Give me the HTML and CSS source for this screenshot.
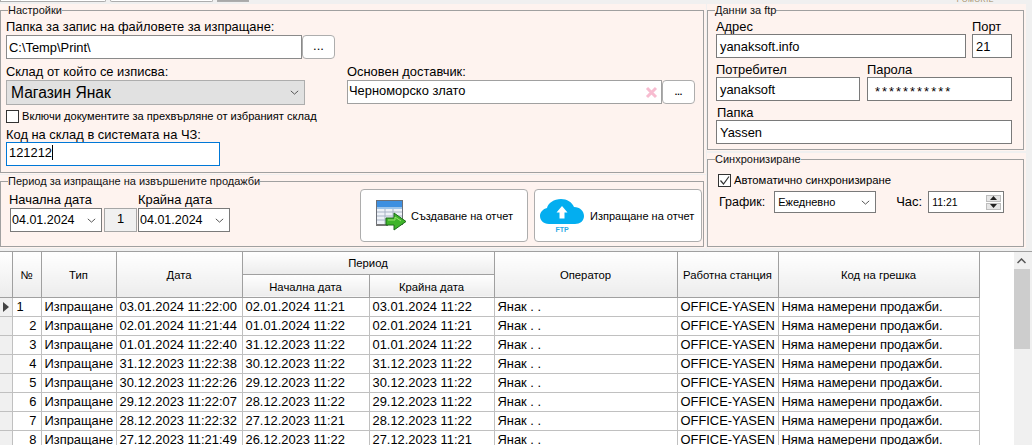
FILE: index.html
```html
<!DOCTYPE html>
<html lang="bg">
<head>
<meta charset="utf-8">
<title>Настройки</title>
<link rel="stylesheet" href="styles.css">
</head>
<body>
<div class="strip">
  <span class="tab tab-a"></span><span class="tab tab-b"></span><span class="tab tab-c"></span>
  <span class="logo">POMORIE</span>
</div>
<div class="top">
  <div class="col-left">
    <div class="panel p-settings">
      <fieldset class="fs">
        <legend>Настройки</legend>
        <div class="lbl l-first">Папка за запис на файловете за изпращане:</div>
        <div class="row">
          <div class="inp w-path">C:\Temp\Print\</div>
          <div class="btn dots">...</div>
        </div>
        <div class="split">
          <div class="split-l">
            <div class="lbl l-wh">Склад от който се изписва:</div>
            <div class="sel-big"><span>Магазин Янак</span>
              <svg class="chev" width="9" height="5" viewBox="0 0 11 6"><path d="M1 1l4.500 4 4.500-4" fill="none" stroke="#555" stroke-width="1.200"/></svg>
            </div>
            <div class="chk-row"><span class="chk"></span><span class="chk-txt">Включи документите за прехвърляне от избраният склад</span></div>
            <div class="lbl l-code">Код на склад в системата на ЧЗ:</div>
            <div class="inp w-code focus">121212<i class="caret"></i></div>
          </div>
          <div class="split-r">
            <div class="lbl l-wh">Основен доставчик:</div>
            <div class="row">
              <div class="inp w-sup sup">Черноморско злато
                <svg class="x" width="13" height="13" viewBox="0 0 13 13"><path d="M2 2l9 9M11 2l-9 9" stroke="#f7bcd0" stroke-width="3"/></svg>
              </div>
              <div class="btn dots dots-b">...</div>
            </div>
          </div>
        </div>
      </fieldset>
    </div>
    <div class="panel p-period">
      <fieldset class="fs">
        <legend>Период за изпращане на извършените продажби</legend>
        <div class="period">
          <div class="dates">
            <div class="d-col">
              <div class="lbl l-date">Начална дата</div>
              <div class="sel w-date">04.01.2024<svg class="chev" width="9" height="5" viewBox="0 0 11 6"><path d="M1 1l4.500 4 4.500-4" fill="none" stroke="#555" stroke-width="1.200"/></svg></div>
            </div>
            <div class="d-one">1</div>
            <div class="d-col">
              <div class="lbl l-date">Крайна дата</div>
              <div class="sel w-date">04.01.2024<svg class="chev" width="9" height="5" viewBox="0 0 11 6"><path d="M1 1l4.500 4 4.500-4" fill="none" stroke="#555" stroke-width="1.200"/></svg></div>
            </div>
          </div>
          <div class="actions">
            <div class="act">
              <svg class="ic-sheet" width="31" height="32" viewBox="0 0 31 32">
                <rect x="0.500" y="0.500" width="26" height="24" fill="#eef2f8" stroke="#6c7078"/>
                <rect x="1" y="1" width="25" height="6" fill="#3d8fe0"/>
                <rect x="1" y="7" width="25" height="2" fill="#9cc4ea"/>
                <path d="M1 12h25M1 16h25M1 20h25M9 9v15M17 9v15" stroke="#a8b4c6"/>
                <rect x="0" y="24" width="12" height="2" fill="#777"/>
                <path d="M10 18h8v-5l12 8.500-12 8.500v-5h-8z" fill="#3fb52a" stroke="#1d6b1a"/>
                <path d="M12 20h7v-3l6 4" fill="none" stroke="#9be36f"/>
              </svg>
              <span>Създаване на отчет</span>
            </div>
            <div class="act">
              <div class="cloud">
                <svg width="44" height="25" viewBox="0 0 44 25">
                  <path d="M9 25C3 25 0 21 0 17c0-4 3-7 7-8 1-5 7-9 14-9 6 0 11 3 13 8 6 0 10 4 10 9 0 5-4 8-9 8z" fill="#03aef0"/>
                  <path d="M22 7l5.500 6.500h-3v6h-5v-6h-3z" fill="#fff"/>
                </svg>
                <span class="ftp">FTP</span>
              </div>
              <span>Изпращане на отчет</span>
            </div>
          </div>
        </div>
      </fieldset>
    </div>
  </div>
  <div class="col-right">
    <div class="panel p-ftp">
      <fieldset class="fs">
        <legend>Данни за ftp</legend>
        <div class="f-row f-r1">
          <div class="f-col"><div class="lbl l-f">Адрес</div><div class="inp f-addr">yanaksoft.info</div></div>
          <div class="f-col"><div class="lbl l-f">Порт</div><div class="inp f-port">21</div></div>
        </div>
        <div class="f-row f-r2">
          <div class="f-col"><div class="lbl l-f">Потребител</div><div class="inp f-user">yanaksoft</div></div>
          <div class="f-col"><div class="lbl l-f">Парола</div><div class="inp f-pass">***********</div></div>
        </div>
        <div class="f-row f-r3">
          <div class="f-col"><div class="lbl l-f l-folder">Папка</div><div class="inp f-folder">Yassen</div></div>
        </div>
      </fieldset>
    </div>
    <div class="panel p-sync">
      <fieldset class="fs">
        <legend>Синхронизиране</legend>
        <div class="chk-row sync-chk"><span class="chk">
          <svg width="13" height="13" viewBox="0 0 13 13"><path d="M2.500 6.500l3 3.500 5.500-7.500" fill="none" stroke="#333" stroke-width="1.200"/></svg>
        </span><span class="chk-txt s-txt">Автоматично синхронизиране</span></div>
        <div class="sched">
          <span class="s-lbl s-graf">График:</span>
          <div class="sel s-sel">Ежедневно<svg class="chev" width="9" height="5" viewBox="0 0 11 6"><path d="M1 1l4.500 4 4.500-4" fill="none" stroke="#555" stroke-width="1.200"/></svg></div>
          <span class="s-lbl s-hour">Час:</span>
          <div class="sel s-time">11:21
            <div class="spin">
              <span class="spin-b"><svg width="7" height="4" viewBox="0 0 7 4"><path d="M3.500 0l3.500 4h-7z" fill="#222"/></svg></span>
              <span class="spin-b"><svg width="7" height="4" viewBox="0 0 7 4"><path d="M3.500 4l3.500-4h-7z" fill="#222"/></svg></span>
            </div>
          </div>
        </div>
      </fieldset>
    </div>
  </div>
</div>
<div class="grid-wrap">
  <table class="grid">
    <colgroup>
      <col class="c0"><col class="c1"><col class="c2"><col class="c3"><col class="c4"><col class="c5"><col class="c6"><col class="c7"><col class="c8">
    </colgroup>
    <thead>
      <tr class="h1">
        <th rowspan="2"></th><th rowspan="2">№</th><th rowspan="2">Тип</th><th rowspan="2">Дата</th>
        <th colspan="2">Период</th>
        <th rowspan="2">Оператор</th><th rowspan="2">Работна станция</th><th rowspan="2">Код на грешка</th>
      </tr>
      <tr class="h2"><th>Начална дата</th><th>Крайна дата</th></tr>
    </thead>
    <tbody>
      <tr><td class="rh"><svg width="6" height="10" viewBox="0 0 6 10"><path d="M0 0l6 5-6 5z" fill="#444"/></svg></td><td class="first-n">1</td><td>Изпращане</td><td>03.01.2024 11:22:00</td><td>02.01.2024 11:21</td><td>03.01.2024 11:22</td><td>Янак . .</td><td>OFFICE-YASEN</td><td>Няма намерени продажби.</td></tr>
      <tr><td class="rh"></td><td class="n">2</td><td>Изпращане</td><td>02.01.2024 11:21:44</td><td>01.01.2024 11:22</td><td>02.01.2024 11:21</td><td>Янак . .</td><td>OFFICE-YASEN</td><td>Няма намерени продажби.</td></tr>
      <tr><td class="rh"></td><td class="n">3</td><td>Изпращане</td><td>01.01.2024 11:22:40</td><td>31.12.2023 11:22</td><td>01.01.2024 11:22</td><td>Янак . .</td><td>OFFICE-YASEN</td><td>Няма намерени продажби.</td></tr>
      <tr><td class="rh"></td><td class="n">4</td><td>Изпращане</td><td>31.12.2023 11:22:38</td><td>30.12.2023 11:22</td><td>31.12.2023 11:22</td><td>Янак . .</td><td>OFFICE-YASEN</td><td>Няма намерени продажби.</td></tr>
      <tr><td class="rh"></td><td class="n">5</td><td>Изпращане</td><td>30.12.2023 11:22:26</td><td>29.12.2023 11:22</td><td>30.12.2023 11:22</td><td>Янак . .</td><td>OFFICE-YASEN</td><td>Няма намерени продажби.</td></tr>
      <tr><td class="rh"></td><td class="n">6</td><td>Изпращане</td><td>29.12.2023 11:22:07</td><td>28.12.2023 11:22</td><td>29.12.2023 11:22</td><td>Янак . .</td><td>OFFICE-YASEN</td><td>Няма намерени продажби.</td></tr>
      <tr><td class="rh"></td><td class="n">7</td><td>Изпращане</td><td>28.12.2023 11:22:32</td><td>27.12.2023 11:21</td><td>28.12.2023 11:22</td><td>Янак . .</td><td>OFFICE-YASEN</td><td>Няма намерени продажби.</td></tr>
      <tr><td class="rh"></td><td class="n">8</td><td>Изпращане</td><td>27.12.2023 11:21:49</td><td>26.12.2023 11:22</td><td>27.12.2023 11:21</td><td>Янак . .</td><td>OFFICE-YASEN</td><td>Няма намерени продажби.</td></tr>
    </tbody>
  </table>
  <div class="filler"></div>
  <div class="scrollbar">
    <svg class="sb-up" width="9" height="6" viewBox="0 0 9 6"><path d="M0.500 5l4-4 4 4" fill="none" stroke="#555" stroke-width="1.500"/></svg>
    <div class="thumb"></div>
  </div>
</div>
</body>
</html>
```

FILE: styles.css
```css
* { box-sizing: border-box; }
html, body { margin: 0; padding: 0; }
body {
  width: 1032px; height: 445px; overflow: hidden;
  background: #f0f0f0; color: #000;
  font: 12.9px/16px "Liberation Sans", Arial, sans-serif;
}

.strip { display: flex; height: 4px; overflow: hidden; }
.tab { display: block; height: 2px; background: #fff; border: 1px solid #adadad; border-top: 0; }
.tab-a { width: 106px; border-radius: 0 0 3px 0; }
.tab-b { width: 103px; margin-left: 4px; border-radius: 0 0 3px 3px; }
.tab-c { width: 32px; height: 2px; margin-left: 4px; background: #a9a9a9; }
.logo {
  margin-left: auto; margin-right: 38px; margin-top: -5px;
  font-size: 7px; line-height: 9px; letter-spacing: 0.6px; color: #a08a60;
}

.top { display: flex; height: 244px; }
.col-left { width: 706px; display: flex; flex-direction: column; }
.col-right { width: 319px; margin-left: 1px; display: flex; flex-direction: column; }

.panel { background: #fef3ef; display: flex; padding: 0 2px 1px 0; }
.p-settings { height: 170px; }
.p-period { height: 73px; margin-top: 1px; }
.p-ftp { height: 147px; }
.p-sync { height: 95px; margin-top: 2px; }

.fs {
  flex: 1; min-width: 0; margin: 0; padding: 0;
  border: 1px solid #a0a0a0;
}
.fs legend {
  margin-left: 7px; padding: 0;
  font-size: 11px; line-height: 12px; height: 12px; color: #111;
}

.lbl { white-space: nowrap; line-height: 14px; height: 14px; }
.row { display: flex; }
.inp {
  height: 24px; line-height: 20px; padding: 2px 3px 0; background: #fff;
  border: 1px solid #7a7a7a; white-space: nowrap; overflow: hidden;
}

.btn {
  width: 33px; height: 24px; background: #fff;
  border: 1px solid #adadad; border-radius: 4px;
  text-align: center; line-height: 20px; font-size: 13px;
}
.dots-b { font-size: 9px; font-weight: 700; line-height: 22px; }

.l-first { margin: 3px 0 0 5px; height: 16px; line-height: 16px; }
.p-settings .row { margin-left: 5px; }
.w-path { width: 296px; border-color: #8a8a8a; padding-left: 2px; }
.split { display: flex; margin-left: 5px; margin-top: 6px; }
.split-l { width: 341px; }
.split-r { flex: 1; }
.split-r .row { margin-left: 0; }
.l-wh { height: 14px; }
.sel-big {
  width: 299px; height: 25px; margin-top: 1px; padding: 0 4px;
  display: flex; align-items: center; justify-content: space-between;
  background: #e1e1e1; border: 1px solid #adadad;
  font-size: 15.6px;
}
.chev { flex: none; }
.sel-big .chev { margin-right: 1px; }
.chk-row { display: flex; align-items: center; }
.chk {
  flex: none; width: 13px; height: 13px; background: #fff;
  border: 1px solid #333; display: block; overflow: hidden;
}
.chk svg { display: block; margin: -1px; }
.chk-txt { margin-left: 3px; font-size: 11.1px; line-height: 13px; white-space: nowrap; }
.split-l .chk-row { margin-top: 5px; }
.l-code { margin-top: 5px; height: 14px; line-height: 14px; }
.w-code { width: 214px; height: 24px; padding: 0 2px; }
.focus { border-color: #0078d7; }
.caret { display: inline-block; width: 1px; height: 15px; background: #000; vertical-align: -3px; }
.w-sup { width: 315px; position: relative; padding: 0 1px; line-height: 20px; border-color: #a0a0a0; }
.sup { height: 24px; margin-top: 1px; }
.split-r .dots { margin-top: 1px; }
.x { position: absolute; right: 3px; top: 5px; }

.period { display: flex; align-items: flex-start; margin-top: -2px; }
.dates { display: flex; align-items: flex-end; margin-left: 9px; height: 47px; }
.d-col { display: flex; flex-direction: column; }
.l-date { line-height: 16px; height: 16px; margin-left: -1px; }
.d-one + .d-col .l-date { margin-left: 0; }
.sel {
  display: flex; align-items: center; justify-content: space-between;
  background: #fff; border: 1px solid #7a7a7a; padding: 0 5px 0 1px; white-space: nowrap;
}
.w-date { width: 92px; height: 24px; font-size: 12.5px; }
.d-one {
  width: 33px; height: 24px; margin: 0 1px 0 2px; text-align: center; line-height: 20px;
  background: #f0f0f0; border: 1px solid #a6a6a6;
}
.actions { display: flex; gap: 6px; margin-left: 130px; margin-top: 4px; }
.act {
  width: 168px; height: 53px; background: #fff; border: 1px solid #adadad; border-radius: 4px;
  display: flex; align-items: center; font-size: 11px; white-space: nowrap;
}
.ic-sheet { margin-left: 15px; margin-right: 4px; flex: none; }
.cloud { width: 44px; height: 36px; margin: 2px 6px 0 5px; flex: none; }
.cloud svg { display: block; }
.ftp {
  display: block; text-align: center; font-size: 7px; line-height: 8px; font-weight: 700;
  color: #2aa9e6; margin-top: 2px;
}

.f-row { display: flex; margin-left: 8px; }
.f-col { display: flex; flex-direction: column; }
.l-f { line-height: 15px; height: 15px; }
.f-r1 { gap: 6px; margin-top: 3px; }
.f-r2 { gap: 7px; margin-top: 4px; }
.f-r3 { margin-top: 4px; }
.f-addr { width: 250px; height: 24px; }
.f-port { width: 40px; height: 24px; }
.f-user { width: 144px; height: 24px; }
.f-pass { width: 145px; height: 24px; padding: 4px 0 0 7px; letter-spacing: 2px; }
.f-folder { width: 296px; height: 24px; }
.l-folder { margin-left: 1px; }

.sync-chk { margin-left: 10px; margin-top: 9px; }
.s-txt { font-size: 11.3px; }
.sched { display: flex; align-items: center; margin-top: 4px; margin-left: 11px; height: 22px; }
.s-lbl { font-size: 12.5px; white-space: nowrap; }
.s-sel { width: 102px; height: 22px; margin-left: 9px; font-size: 11px; padding-left: 3px; }
.s-hour { margin-left: 20px; font-size: 13px; }
.s-time { width: 76px; height: 22px; margin-left: 6px; font-size: 10.5px; padding: 0 2px 0 3px; }
.spin { display: flex; flex-direction: column; gap: 1px; }
.spin-b {
  display: flex; align-items: center; justify-content: center;
  width: 15px; height: 7px; background: #e6e6e6; border: 1px solid #bdbdbd;
}
.spin-b svg { display: block; }

.grid-wrap {
  display: flex; height: 194px; margin-top: 3px; background: #fff;
  border-top: 1px solid #a0a0a0; overflow: hidden;
}
.grid {
  flex: none; width: 979px; table-layout: fixed; border-collapse: collapse;
  font-size: 12.9px; align-self: flex-start;
}
.c0 { width: 12px; } .c1 { width: 29px; } .c2 { width: 75px; } .c3 { width: 126px; }
.c4 { width: 127px; } .c5 { width: 125px; } .c6 { width: 183px; } .c7 { width: 101px; } .c8 { width: 201px; }
.grid th {
  font-weight: 400; font-size: 11.3px; padding: 2px 0 0;
  background: linear-gradient(#fff, #ececec);
  border: 1px solid #a0a0a0; border-top: 0;
}
.grid .h1 th[colspan] { padding-top: 0; }
.h1 { height: 22px; }
.h2 { height: 23px; }
.grid th:first-child { border-left: 0; }
.grid td {
  height: 19px; padding: 0 0 0 3px; white-space: nowrap; overflow: hidden; line-height: 18px;
  border: 1px solid #c0c0c0;
}
.grid td:first-child { border-left: 0; }
.grid td.rh { background: #f0f0f0; padding: 0 0 0 3px; }
.rh svg { display: block; }
.grid td.first-n { padding-left: 4px; }
.grid td.n { text-align: right; padding-right: 4px; }

.filler { flex: 1; }
.scrollbar {
  flex: none; width: 18px; background: #f0f0f0; display: flex; flex-direction: column;
}
.sb-up { margin: 6px 0 0 3px; flex: none; display: block; }
.thumb { width: 16px; height: 80px; margin-top: 5px; background: #cdcdcd; }
```
